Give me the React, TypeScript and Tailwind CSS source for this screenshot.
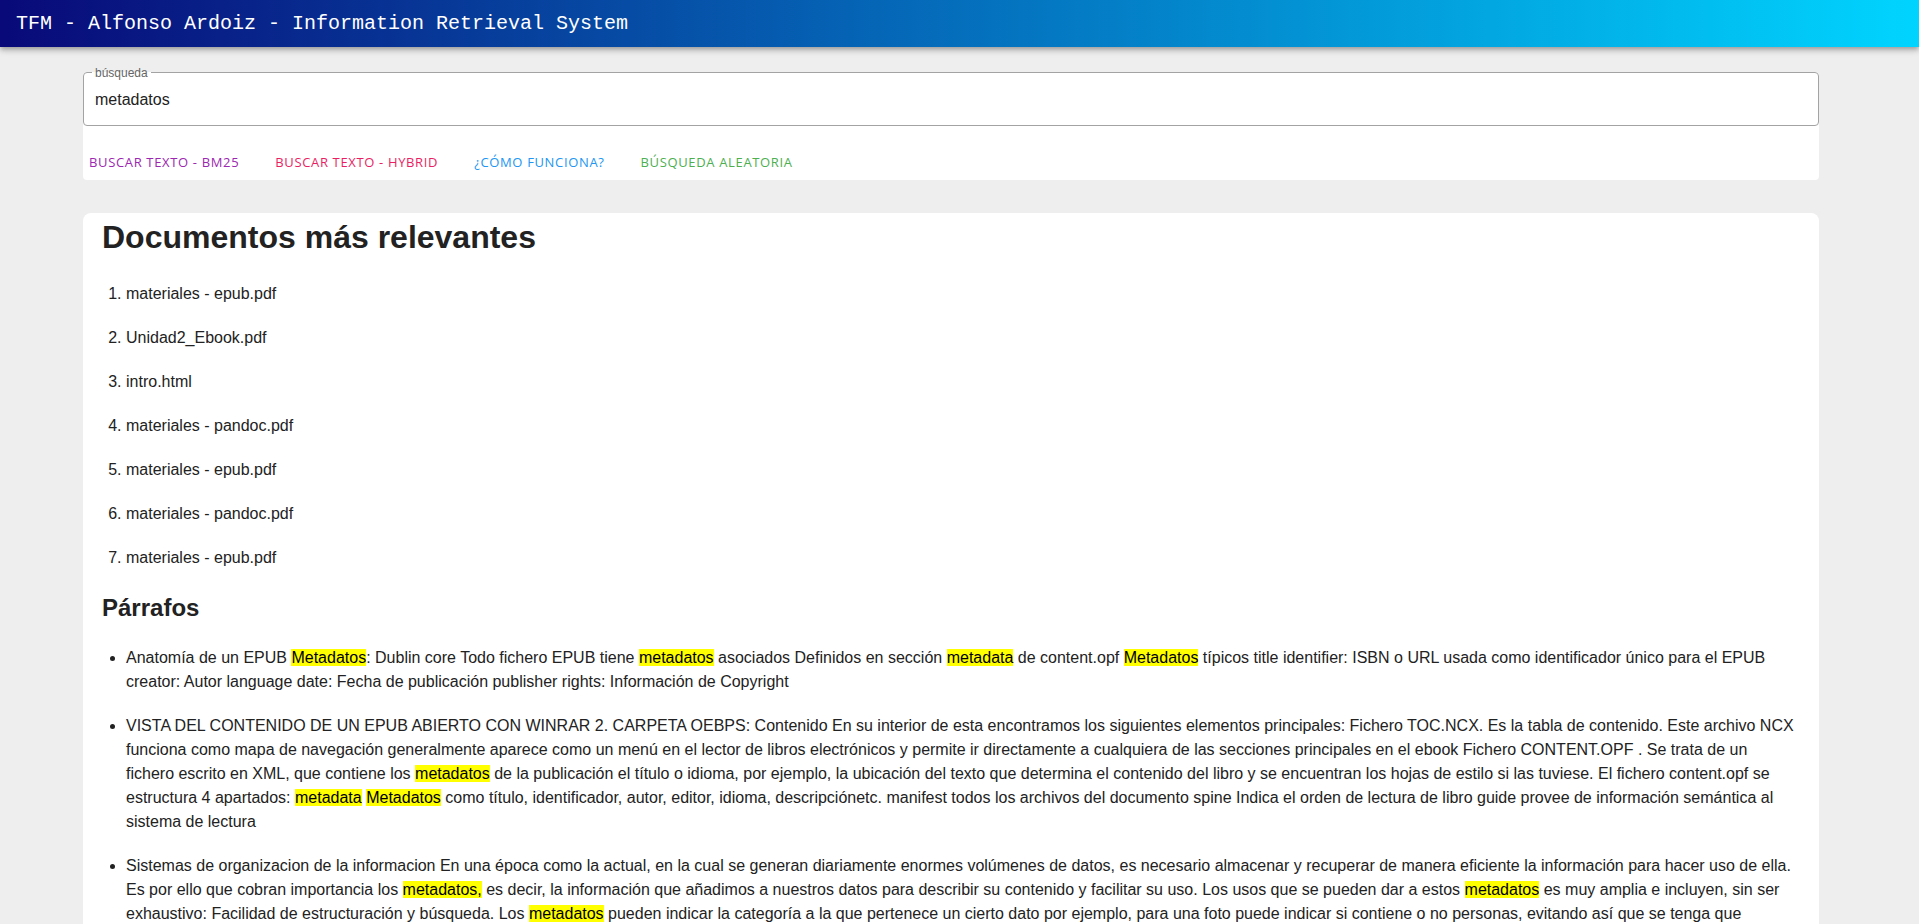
import React from "react";

type Part = string | { hl: string };

const documentos = [
  "materiales - epub.pdf",
  "Unidad2_Ebook.pdf",
  "intro.html",
  "materiales - pandoc.pdf",
  "materiales - epub.pdf",
  "materiales - pandoc.pdf",
  "materiales - epub.pdf",
];

const parrafos: Part[][] = [
  [
    "Anatomía de un EPUB ",
    { hl: "Metadatos" },
    ": Dublin core Todo fichero EPUB tiene ",
    { hl: "metadatos" },
    " asociados Definidos en sección ",
    { hl: "metadata" },
    " de content.opf ",
    { hl: "Metadatos" },
    " típicos title identifier: ISBN o URL usada como identificador único para el EPUB creator: Autor language date: Fecha de publicación publisher rights: Información de Copyright",
  ],
  [
    "VISTA DEL CONTENIDO DE UN EPUB ABIERTO CON WINRAR 2. CARPETA OEBPS: Contenido En su interior de esta encontramos los siguientes elementos principales: Fichero TOC.NCX. Es la tabla de contenido. Este archivo NCX funciona como mapa de navegación generalmente aparece como un menú en el lector de libros electrónicos y permite ir directamente a cualquiera de las secciones principales en el ebook Fichero CONTENT.OPF . Se trata de un fichero escrito en XML, que contiene los ",
    { hl: "metadatos" },
    " de la publicación el título o idioma, por ejemplo, la ubicación del texto que determina el contenido del libro y se encuentran los hojas de estilo si las tuviese. El fichero content.opf se estructura 4 apartados: ",
    { hl: "metadata" },
    " ",
    { hl: "Metadatos" },
    " como título, identificador, autor, editor, idioma, descripciónetc. manifest todos los archivos del documento spine Indica el orden de lectura de libro guide provee de información semántica al sistema de lectura",
  ],
  [
    "Sistemas de organizacion de la informacion En una época como la actual, en la cual se generan diariamente enormes volúmenes de datos, es necesario almacenar y recuperar de manera eficiente la información para hacer uso de ella. Es por ello que cobran importancia los ",
    { hl: "metadatos," },
    " es decir, la información que añadimos a nuestros datos para describir su contenido y facilitar su uso. Los usos que se pueden dar a estos ",
    { hl: "metadatos" },
    " es muy amplia e incluyen, sin ser exhaustivo: Facilidad de estructuración y búsqueda. Los ",
    { hl: "metadatos" },
    " pueden indicar la categoría a la que pertenece un cierto dato por ejemplo, para una foto puede indicar si contiene o no personas, evitando así que se tenga que analizar el contenido de cada imagen. Preservación de la información a lo largo del tiempo. Interoperabilidad entre sistemas distintos que intercambian información.",
  ],
  [
    "Estándares de ",
    { hl: "metadatos" },
    " Existen multitud de esquemas para describir recursos digitales, entre los que destacan Dublin Core, MARC, MODS o METS. Cada uno de ellos define un conjunto de elementos y las reglas para su uso, de modo que distintos sistemas puedan compartir la misma descripción de un recurso sin pérdida de información.",
  ],
  [
    "El paquete EPUB está formado por un contenedor ZIP que incluye el fichero mimetype, la carpeta META-INF con el fichero container.xml y la carpeta OEBPS con el contenido. Los ",
    { hl: "metadatos" },
    " del libro se declaran en el fichero de paquete, junto con el manifiesto de recursos y el orden de lectura.",
  ],
  [
    "Conversión de documentos con Pandoc Pandoc permite generar ficheros EPUB a partir de Markdown, indicando los ",
    { hl: "metadatos" },
    " en un bloque YAML al comienzo del documento: título, autor, idioma, fecha y derechos. El resultado incluye automáticamente la tabla de contenido y la hoja de estilos por defecto.",
  ],
];

const botones = [
  { label: "BUSCAR TEXTO - BM25", cls: "text-[#9c27b0]" },
  { label: "BUSCAR TEXTO - HYBRID", cls: "text-[#e91e63]" },
  { label: "¿CÓMO FUNCIONA?", cls: "text-[#2196f3]" },
  { label: "BÚSQUEDA ALEATORIA", cls: "text-[#4caf50]" },
];

const App = () => {
  return (
    <div className="min-h-screen bg-[#eeeeee] pb-[40px] font-['Liberation_Sans',Arial,sans-serif] text-[#222]">
      <header className="h-[47px] flex items-center px-4 bg-[linear-gradient(90deg,#090979_0%,#00d4ff_100%)] shadow-[0_2px_4px_-1px_rgba(0,0,0,0.2),0_4px_5px_0_rgba(0,0,0,0.14),0_1px_10px_0_rgba(0,0,0,0.12)]">
        <h1 className="text-white text-[20px] font-['Liberation_Mono','Courier_New',monospace]">
          TFM - Alfonso Ardoiz - Information Retrieval System
        </h1>
      </header>

      <div className="ml-[83px] mr-[100px]">
        {/* buscador */}
        <div className="mt-[25px] flex flex-col bg-white rounded-[4px]">
          <fieldset className="-mt-[7px] border border-[#a3a3a3] rounded-[4px] px-[8px] pb-[4px] bg-white">
            <legend className="px-[3px] text-[12px] leading-[14px] text-[#666] translate-y-[1px]">búsqueda</legend>
            <input
              className="w-full h-[42px] px-[3px] text-[16px] text-[#222] outline-none bg-transparent"
              defaultValue="metadatos"
            />
          </fieldset>
          <div className="flex gap-6 pt-[22px] pb-[2px]">
            {botones.map((b) => (
              <button
                key={b.label}
                className={`h-[30px] px-[6px] text-[13px] font-medium tracking-[0.65px] font-['Open_Sans',sans-serif] ${b.cls}`}
              >
                {b.label}
              </button>
            ))}
          </div>
        </div>

        {/* resultados */}
        <div className="mt-[33px] bg-white rounded-lg pl-[19px] pr-[20px] pt-[6px] pb-[24px]">
          <h1 className="text-[32px] leading-[37px] font-bold text-[#222]">Documentos más relevantes</h1>
          <ol className="mt-[16px] list-decimal pl-[24px] text-[16px]">
            {documentos.map((d, i) => (
              <li key={i} className="leading-[44px]">
                {d}
              </li>
            ))}
          </ol>

          <h2 className="mt-[14px] text-[24px] leading-[28px] font-bold">Párrafos</h2>
          <ul className="mt-[24px] list-disc pl-[24px] text-[16px] leading-[24px] space-y-5">
            {parrafos.map((p, i) => (
              <li key={i}>
                {p.map((part, j) =>
                  typeof part === "string" ? (
                    <React.Fragment key={j}>{part}</React.Fragment>
                  ) : (
                    <mark key={j} className="bg-[#ffff00] text-black">
                      {part.hl}
                    </mark>
                  )
                )}
              </li>
            ))}
          </ul>
        </div>
      </div>
    </div>
  );
};

export default App;
